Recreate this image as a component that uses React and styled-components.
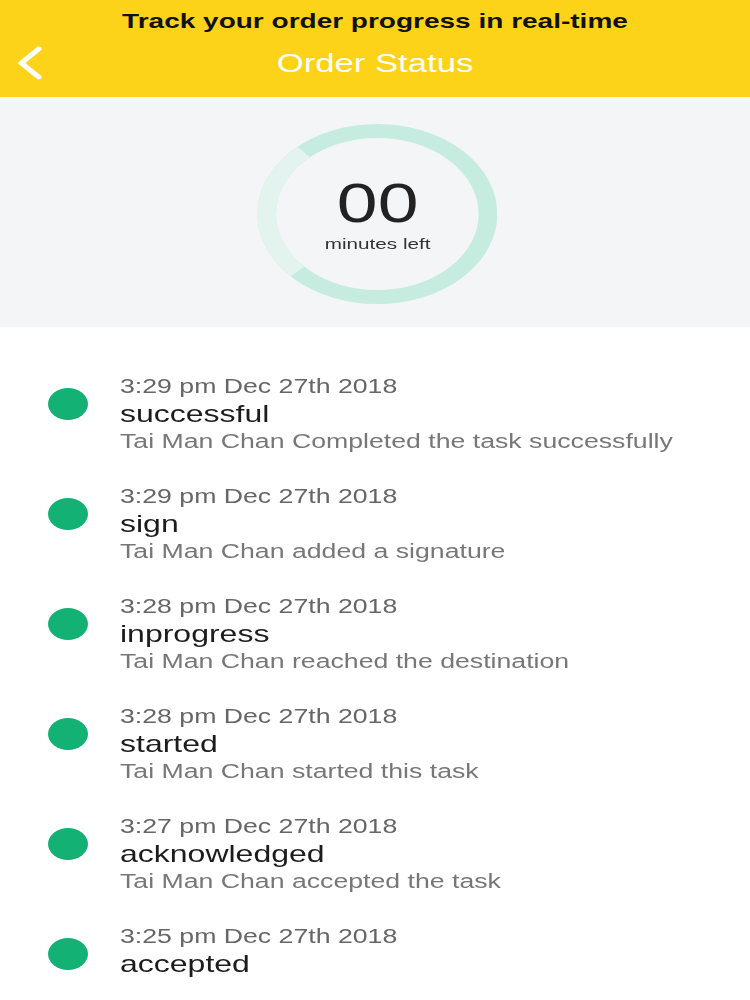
import React from 'react';
import styled, { createGlobalStyle } from 'styled-components';

const Global = createGlobalStyle`
  html, body {
    margin: 0;
    padding: 0;
    background: #ffffff;
    overflow: hidden;
  }
  body {
    font-family: "Liberation Sans", Arial, sans-serif;
  }
`;

// the screen is drawn at phone width and stretched to fill the frame
const Screen = styled.div`
  width: 562.5px;
  transform: scaleX(1.3333);
  transform-origin: left top;
`;

const Header = styled.header`
  background: #fdd319;
  height: 97px;
  display: flex;
  flex-direction: column;
`;

const Caption = styled.div`
  padding: 7px 0;
  line-height: 28px;
  font-size: 21px;
  font-weight: 700;
  color: #111;
  text-align: center;
`;

const NavRow = styled.div`
  height: 42px;
  display: grid;
  grid-template-columns: 50px 1fr 50px;
  align-items: center;
`;

const Back = styled.button`
  background: none;
  border: 0;
  padding: 0 0 0 12px;
  display: flex;
  align-items: center;
  cursor: pointer;
`;

const Title = styled.h1`
  margin: 0;
  font-size: 26px;
  font-weight: 400;
  color: #ffffff;
  text-align: center;
`;

const Timer = styled.section`
  background: #f4f5f7;
  padding: 27px 0 23px;
  display: flex;
  justify-content: center;
`;

const Ring = styled.div`
  display: grid;
  width: 180px;
  height: 180px;
  margin-left: 4px;
  & > * {
    grid-area: 1 / 1;
  }
`;

const RingText = styled.div`
  display: flex;
  flex-direction: column;
  align-items: center;
  justify-content: center;
  gap: 3px;
`;

const Minutes = styled.div`
  font-size: 55px;
  line-height: 56px;
  color: #222;
`;

const Label = styled.div`
  font-size: 15.5px;
  line-height: 20px;
  color: #333;
`;

const List = styled.ul`
  list-style: none;
  margin: 0;
  padding: 46px 0 0 0;
`;

const Item = styled.li`
  display: flex;
  align-items: flex-start;
  margin-bottom: 30px;
`;

const Dot = styled.span`
  flex: none;
  width: 30px;
  height: 32px;
  border-radius: 50%;
  background: #13b173;
  margin: 15px 0 0 36px;
`;

const Body = styled.div`
  margin-left: 24px;
  display: flex;
  flex-direction: column;
`;

const Time = styled.div`
  font-size: 20px;
  line-height: 26px;
  color: #666;
`;

const Status = styled.div`
  font-size: 24px;
  line-height: 30px;
  color: #1c1c1c;
`;

const Desc = styled.div`
  font-size: 20px;
  line-height: 24px;
  color: #777;
`;

const events = [
  { time: '3:29 pm Dec 27th 2018', status: 'successful', desc: 'Tai Man Chan Completed the task successfully' },
  { time: '3:29 pm Dec 27th 2018', status: 'sign', desc: 'Tai Man Chan added a signature' },
  { time: '3:28 pm Dec 27th 2018', status: 'inprogress', desc: 'Tai Man Chan reached the destination' },
  { time: '3:28 pm Dec 27th 2018', status: 'started', desc: 'Tai Man Chan started this task' },
  { time: '3:27 pm Dec 27th 2018', status: 'acknowledged', desc: 'Tai Man Chan accepted the task' },
  { time: '3:25 pm Dec 27th 2018', status: 'accepted' },
];

function ProgressRing() {
  const r = 83;
  const c = 2 * Math.PI * r;
  return (
    <svg width="180" height="180" viewBox="0 0 180 180">
      <circle cx="90" cy="90" r={r} fill="none" stroke="#c6ecdf" strokeWidth="14" />
      <circle
        cx="90"
        cy="90"
        r={r}
        fill="none"
        stroke="#e3f3ee"
        strokeWidth="14"
        strokeDasharray={`${(c * 92) / 360} ${c}`}
        strokeDashoffset={-(c * 136) / 360}
      />
    </svg>
  );
}

export default function App() {
  return (
    <Screen>
      <Global />
      <Header>
        <Caption>Track your order progress in real-time</Caption>
        <NavRow>
          <Back aria-label="back">
            <svg width="22" height="34" viewBox="0 0 22 34">
              <polyline points="17,3 4,17 17,31" fill="none" stroke="#fff" strokeWidth="4.5" strokeLinecap="round" strokeLinejoin="round" />
            </svg>
          </Back>
          <Title>Order Status</Title>
          <span />
        </NavRow>
      </Header>
      <Timer>
        <Ring>
          <ProgressRing />
          <RingText>
            <Minutes>00</Minutes>
            <Label>minutes left</Label>
          </RingText>
        </Ring>
      </Timer>
      <List>
        {events.map((e, i) => (
          <Item key={i}>
            <Dot />
            <Body>
              <Time>{e.time}</Time>
              <Status>{e.status}</Status>
              {e.desc && <Desc>{e.desc}</Desc>}
            </Body>
          </Item>
        ))}
      </List>
    </Screen>
  );
}
